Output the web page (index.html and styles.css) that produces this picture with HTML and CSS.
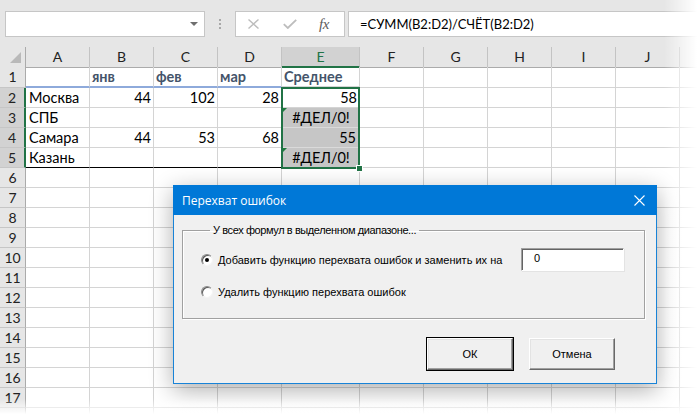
FILE: index.html
```html
<!DOCTYPE html>
<html lang="ru">
<head>
<meta charset="utf-8">
<title>Перехват ошибок</title>
<link rel="stylesheet" href="styles.css">
</head>
<body>
<div class="app">
  <div class="toolbar">
    <div class="namebox"><span class="caret"></span></div>
    <div class="grip"><i></i><i></i><i></i></div>
    <div class="fxbox">
      <svg class="ico-x" width="11" height="10" viewBox="0 0 11 10"><path d="M0.5 0.5L10.5 9.5M10.5 0.5L0.5 9.5" stroke="#bdbdbd" stroke-width="1.4" fill="none"/></svg>
      <svg class="ico-ok" width="14" height="10" viewBox="0 0 14 10"><path d="M0.8 5.2L4.8 9L13.2 0.8" stroke="#bdbdbd" stroke-width="1.8" fill="none"/></svg>
      <span class="fx">fx</span>
    </div>
    <div class="formula">=СУММ(B2:D2)/СЧЁТ(B2:D2)</div>
  </div>

  <div class="sheet">
    <div class="row head">
      <div class="corner"><svg width="12" height="12" viewBox="0 0 12 12"><path d="M0 11L11 0V11Z" fill="#b9b9b9"/></svg></div>
      <div class="ch">A</div><div class="ch">B</div><div class="ch">C</div><div class="ch">D</div><div class="ch on">E</div><div class="ch">F</div><div class="ch">G</div><div class="ch">H</div><div class="ch">I</div><div class="ch">J</div><div class="ch"></div>
    </div>
    <div class="row r1">
      <div class="rh">1</div>
      <div class="c hd"></div><div class="c hd">янв</div><div class="c hd">фев</div><div class="c hd">мар</div><div class="c hd hde">Среднее</div><div class="c"></div><div class="c"></div><div class="c"></div><div class="c"></div><div class="c"></div><div class="c"></div>
    </div>
    <div class="row">
      <div class="rh on">2</div>
      <div class="c">Москва</div><div class="c n">44</div><div class="c n">102</div><div class="c n">28</div><div class="c n">58</div><div class="c"></div><div class="c"></div><div class="c"></div><div class="c"></div><div class="c"></div><div class="c"></div>
    </div>
    <div class="row">
      <div class="rh on">3</div>
      <div class="c">СПБ</div><div class="c"></div><div class="c"></div><div class="c"></div><div class="c shade err">#ДЕЛ/0!</div><div class="c"></div><div class="c"></div><div class="c"></div><div class="c"></div><div class="c"></div><div class="c"></div>
    </div>
    <div class="row">
      <div class="rh on">4</div>
      <div class="c">Самара</div><div class="c n">44</div><div class="c n">53</div><div class="c n">68</div><div class="c n shade">55</div><div class="c"></div><div class="c"></div><div class="c"></div><div class="c"></div><div class="c"></div><div class="c"></div>
    </div>
    <div class="row">
      <div class="rh on">5</div>
      <div class="c tot">Казань</div><div class="c tot"></div><div class="c tot"></div><div class="c tot"></div><div class="c shade err">#ДЕЛ/0!</div><div class="c"></div><div class="c"></div><div class="c"></div><div class="c"></div><div class="c"></div><div class="c"></div>
    </div>
    <div class="row"><div class="rh">6</div><div class="c"></div><div class="c"></div><div class="c"></div><div class="c"></div><div class="c"></div><div class="c"></div><div class="c"></div><div class="c"></div><div class="c"></div><div class="c"></div><div class="c"></div></div>
    <div class="row"><div class="rh">7</div><div class="c"></div><div class="c"></div><div class="c"></div><div class="c"></div><div class="c"></div><div class="c"></div><div class="c"></div><div class="c"></div><div class="c"></div><div class="c"></div><div class="c"></div></div>
    <div class="row"><div class="rh">8</div><div class="c"></div><div class="c"></div><div class="c"></div><div class="c"></div><div class="c"></div><div class="c"></div><div class="c"></div><div class="c"></div><div class="c"></div><div class="c"></div><div class="c"></div></div>
    <div class="row"><div class="rh">9</div><div class="c"></div><div class="c"></div><div class="c"></div><div class="c"></div><div class="c"></div><div class="c"></div><div class="c"></div><div class="c"></div><div class="c"></div><div class="c"></div><div class="c"></div></div>
    <div class="row"><div class="rh">10</div><div class="c"></div><div class="c"></div><div class="c"></div><div class="c"></div><div class="c"></div><div class="c"></div><div class="c"></div><div class="c"></div><div class="c"></div><div class="c"></div><div class="c"></div></div>
    <div class="row"><div class="rh">11</div><div class="c"></div><div class="c"></div><div class="c"></div><div class="c"></div><div class="c"></div><div class="c"></div><div class="c"></div><div class="c"></div><div class="c"></div><div class="c"></div><div class="c"></div></div>
    <div class="row"><div class="rh">12</div><div class="c"></div><div class="c"></div><div class="c"></div><div class="c"></div><div class="c"></div><div class="c"></div><div class="c"></div><div class="c"></div><div class="c"></div><div class="c"></div><div class="c"></div></div>
    <div class="row"><div class="rh">13</div><div class="c"></div><div class="c"></div><div class="c"></div><div class="c"></div><div class="c"></div><div class="c"></div><div class="c"></div><div class="c"></div><div class="c"></div><div class="c"></div><div class="c"></div></div>
    <div class="row"><div class="rh">14</div><div class="c"></div><div class="c"></div><div class="c"></div><div class="c"></div><div class="c"></div><div class="c"></div><div class="c"></div><div class="c"></div><div class="c"></div><div class="c"></div><div class="c"></div></div>
    <div class="row"><div class="rh">15</div><div class="c"></div><div class="c"></div><div class="c"></div><div class="c"></div><div class="c"></div><div class="c"></div><div class="c"></div><div class="c"></div><div class="c"></div><div class="c"></div><div class="c"></div></div>
    <div class="row"><div class="rh">16</div><div class="c"></div><div class="c"></div><div class="c"></div><div class="c"></div><div class="c"></div><div class="c"></div><div class="c"></div><div class="c"></div><div class="c"></div><div class="c"></div><div class="c"></div></div>
    <div class="row"><div class="rh">17</div><div class="c"></div><div class="c"></div><div class="c"></div><div class="c"></div><div class="c"></div><div class="c"></div><div class="c"></div><div class="c"></div><div class="c"></div><div class="c"></div><div class="c"></div></div>
    <div class="row"><div class="rh"></div><div class="c"></div><div class="c"></div><div class="c"></div><div class="c"></div><div class="c"></div><div class="c"></div><div class="c"></div><div class="c"></div><div class="c"></div><div class="c"></div><div class="c"></div></div>

    <div class="selection"><span class="handle"></span></div>
  </div>

  <div class="dialog">
    <div class="titlebar">
      <span class="title">Перехват ошибок</span>
      <svg class="close" width="11" height="11" viewBox="0 0 11 11"><path d="M0.5 0.5L10.5 10.5M10.5 0.5L0.5 10.5" stroke="#fff" stroke-width="1.1" fill="none"/></svg>
    </div>
    <div class="dbody">
      <fieldset class="group">
        <legend>У всех формул в выделенном диапазоне...</legend>
        <div class="opt opt1"><span class="radio on"></span><span class="lbl">Добавить функцию перехвата ошибок и заменить их на</span><span class="input">0</span></div>
        <div class="opt opt2"><span class="radio"></span><span class="lbl">Удалить функцию перехвата ошибок</span></div>
      </fieldset>
      <div class="buttons">
        <div class="btn default">ОК</div>
        <div class="btn">Отмена</div>
      </div>
    </div>
  </div>

  <div class="fade-r"></div>
  <div class="fade-b"></div>
</div>
</body>
</html>
```

FILE: styles.css
```css
* { box-sizing: border-box; margin: 0; padding: 0; }
html, body { width: 700px; height: 417px; overflow: hidden; background: #fff; }
body { font-family: Lato, "Liberation Sans", sans-serif; color: #000; }

.app { position: relative; width: 700px; height: 417px; overflow: hidden; }

/* ---------- toolbar ---------- */
.toolbar {
  height: 47px;
  background: #e6e6e6;
  display: flex;
  align-items: flex-start;
  padding: 11px 0 0 5px;
}
.namebox {
  width: 200px; height: 26px;
  background: #fff;
  border: 1px solid #c6c6c6;
  display: flex; align-items: center; justify-content: flex-end;
  padding-right: 6px;
}
.caret {
  width: 0; height: 0;
  border-left: 4px solid transparent;
  border-right: 4px solid transparent;
  border-top: 4px solid #6f6f6f;
}
.grip {
  width: 30px; height: 26px;
  display: flex; flex-direction: column; align-items: center;
  padding-top: 8px; gap: 2px;
}
.grip i { display: block; width: 2px; height: 2px; background: #a8a8a8; }
.fxbox {
  width: 110px; height: 26px;
  background: #fff;
  border: 1px solid #c6c6c6;
  display: flex; align-items: center;
  padding-left: 12px;
}
.ico-ok { margin-left: 24px; }
.fx {
  margin-left: 22px;
  font-family: "Liberation Serif", serif;
  font-style: italic;
  font-size: 15px;
  color: #5d5d5d;
  letter-spacing: -0.5px;
}
.formula {
  flex: 1;
  margin-left: 3px;
  height: 26px;
  background: #fff;
  border: 1px solid #c6c6c6;
  border-right: none;
  padding-left: 11px;
  font-size: 13px;
  line-height: 24px;
  color: #000;
}

/* ---------- sheet ---------- */
.sheet { position: relative; display: flex; flex-direction: column; }
.row {
  display: grid;
  grid-template-columns: 26px 64px 64px 64px 64px 78px 64px 64px 64px 64px 64px 1fr;
  height: 20px;
  flex: none;
}
.row.r1 { height: 21px; }

.head { background: #e6e6e6; }
.corner {
  border-right: 1px solid #ababab;
  border-bottom: 1px solid #ababab;
  display: flex; align-items: flex-end; justify-content: flex-end;
  padding: 0 3px 3px 0;
}
.ch {
  border-right: 1px solid #c3c3c3;
  border-bottom: 1px solid #ababab;
  text-align: center;
  font-size: 14px;
  line-height: 19px;
  color: #222;
}
.ch.on {
  background: #d2d2d2;
  color: #217346;
  border-bottom: 2px solid #217346;
}

.rh {
  background: #e6e6e6;
  border-right: 1px solid #ababab;
  border-bottom: 1px solid #c6c6c6;
  text-align: center;
  font-size: 14px;
  line-height: 19px;
  color: #222;
}
.r1 .rh { line-height: 20px; }
.rh.on {
  background: #d2d2d2;
  border-right: 2px solid #217346;
}

.c {
  border-right: 1px solid #d4d4d4;
  border-bottom: 1px solid #d4d4d4;
  font-size: 14.5px;
  line-height: 19px;
  padding: 0 2px 0 3px;
  white-space: nowrap;
  overflow: hidden;
  position: relative;
}
.c.n { text-align: right; }
.c.hd {
  font-weight: bold;
  color: #44546a;
  border-bottom: 2px solid #8eaadb;
  line-height: 20px;
  padding-left: 2px;
}
.c.hde { border-bottom-color: #d4d4d4; }
.c.tot { border-bottom: 1px solid #000; }
.c.shade { background: #c6c6c6; border-bottom-color: #dadada; }
.c.err { text-align: center; }
.c.err::before {
  content: "";
  position: absolute; left: 0; top: 0;
  width: 0; height: 0;
  border-top: 5px solid #1e7b3e;
  border-right: 5px solid transparent;
}
.c.n.shade { padding-right: 3px; }

.selection {
  position: absolute;
  left: 281px; top: 40px;
  width: 79px; height: 82px;
  border: 2px solid #217346;
  pointer-events: none;
}
.handle {
  position: absolute;
  right: -5px; bottom: -5px;
  width: 7px; height: 7px;
  background: #217346;
  border: 1px solid #fff;
}

/* ---------- dialog ---------- */
.dialog {
  position: absolute;
  left: 173px; top: 185px;
  width: 484px; height: 199px;
  background: #f0f0f0;
  border: 1px solid #1883d7;
  box-shadow: 0 6px 22px rgba(0,0,0,0.32);
  display: flex; flex-direction: column;
  font-family: "Liberation Sans", Arial, sans-serif;
  font-size: 11px;
  color: #000;
}
.titlebar {
  height: 30px;
  margin: -1px -1px 0 -1px;
  background: #0078d7;
  display: flex; align-items: center; justify-content: space-between;
  padding: 0 12px 0 9px;
}
.title {
  font-family: "Open Sans", "Noto Sans", sans-serif;
  font-size: 12px;
  color: #fff;
}
.dbody {
  flex: 1;
  display: flex; flex-direction: column;
  padding: 9px 11px 0 8px;
}
.group {
  height: 95px;
  border: 1px solid #a0a0a0;
  box-shadow: 1px 1px 0 #fff, inset 1px 1px 0 #fff;
  padding: 11px 20px 0 18px;
  display: flex; flex-direction: column;
}
.group legend {
  margin-left: 9px;
  padding: 0 3px;
  font-size: 11px;
  line-height: 13px;
  letter-spacing: -0.4px;
}
.opt { display: flex; align-items: center; }
.opt1 { height: 23px; }
.opt2 { height: 16px; margin-top: 13px; }
.radio {
  width: 12px; height: 12px;
  border-radius: 50%;
  background: #fff;
  border: 1px solid;
  border-color: #8a8a8a #f4f4f4 #f4f4f4 #8a8a8a;
  box-shadow: inset 1px 1px 0 #5a5a5a;
  margin-right: 5px;
  display: flex; align-items: center; justify-content: center;
  flex: none;
}
.radio.on::after {
  content: "";
  width: 4px; height: 4px;
  border-radius: 50%;
  background: #000;
}
.input {
  margin-left: auto;
  width: 103px; height: 23px;
  background: #fff;
  border: 1px solid;
  border-color: #a0a0a0 #fff #fff #a0a0a0;
  box-shadow: inset 1px 1px 0 #646464, 1px 1px 0 #e3e3e3;
  padding-left: 12px;
  line-height: 19px;
  font-size: 11px;
}
.buttons {
  display: flex; justify-content: flex-end;
  gap: 16px;
  margin-top: 19px;
  padding-right: 30px;
}
.btn {
  width: 86px; height: 32px;
  background: #f0f0f0;
  border: 1px solid;
  border-color: #fff #696969 #696969 #fff;
  box-shadow: inset -1px -1px 0 #a0a0a0, inset 1px 1px 0 #e3e3e3;
  text-align: center;
  line-height: 30px;
  font-size: 11px;
}
.btn.default {
  outline: 1px solid #000;
  outline-offset: 0;
  border-color: #fff #696969 #696969 #fff;
}

/* ---------- screenshot edge fade ---------- */
.fade-r {
  position: absolute; top: 0; right: 0;
  width: 36px; height: 417px;
  background: linear-gradient(to right, rgba(255,255,255,0), #fff 92%);
  pointer-events: none;
}
.fade-b {
  position: absolute; left: 0; bottom: 0;
  width: 700px; height: 18px;
  background: linear-gradient(to bottom, rgba(255,255,255,0), #fff 85%);
  pointer-events: none;
}
```
